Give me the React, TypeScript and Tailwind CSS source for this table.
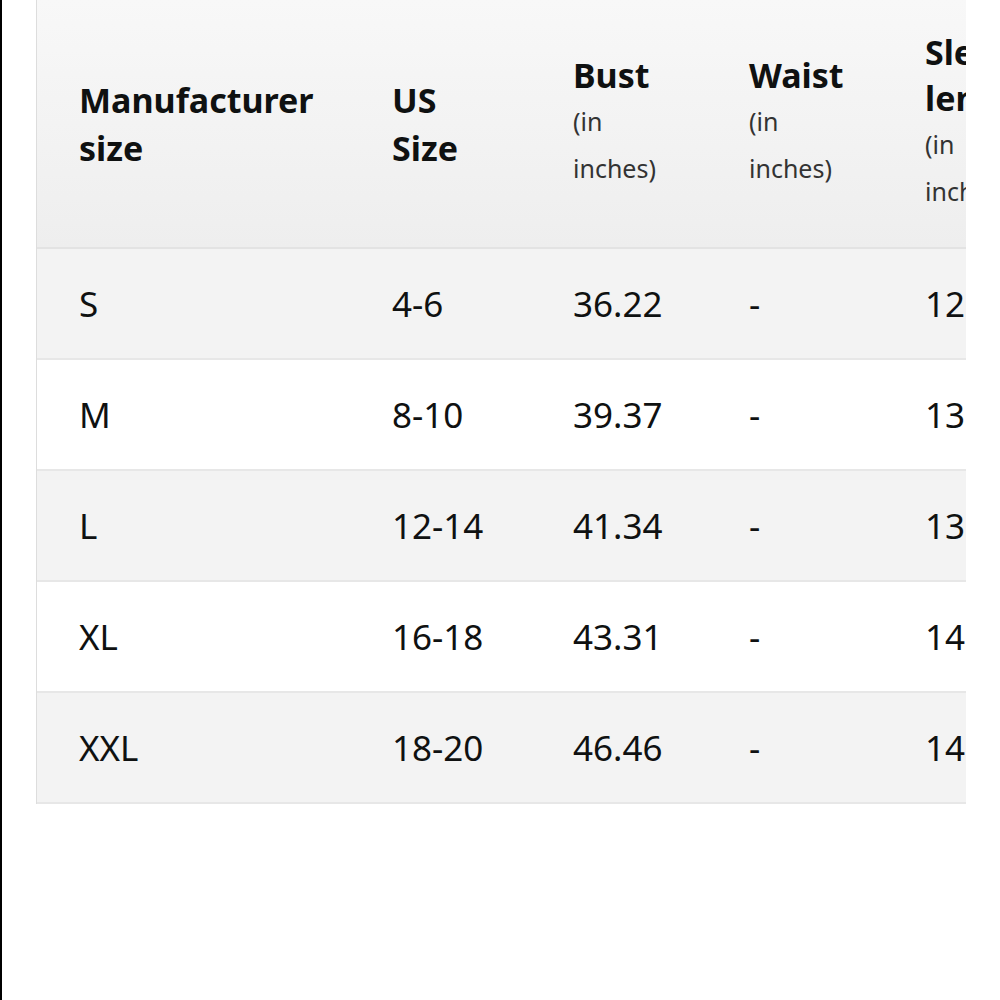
import React from "react";

const rows = [
  ["S", "4-6", "36.22", "-", "12"],
  ["M", "8-10", "39.37", "-", "13"],
  ["L", "12-14", "41.34", "-", "13"],
  ["XL", "16-18", "43.31", "-", "14"],
  ["XXL", "18-20", "46.46", "-", "14"],
];

const widths = ["w-[313px]", "w-[181px]", "w-[176px]", "w-[176px]", "w-[176px]"];

export default function App() {
  return (
    <div
      className="w-[1000px] h-[1000px] bg-white flex text-[#0f1111]"
      style={{ fontFamily: '"Noto Sans", "Open Sans", sans-serif' }}
    >
      <div className="w-[2px] h-full bg-black" />
      <div className="ml-[34px] w-[930px] overflow-hidden">
        <div className="w-[1100px] border-l border-[#dddddd]">
          <div className="flex h-[249px] bg-gradient-to-b from-[#f8f8f8] to-[#eeeeee] border-b-2 border-[#e3e3e3]">
            <div className={`${widths[0]} shrink-0 pl-[42px] flex flex-col justify-center text-[34px] font-bold leading-[48px]`}>
              <span>Manufacturer</span>
              <span>size</span>
            </div>
            <div className={`${widths[1]} shrink-0 pl-[42px] flex flex-col justify-center text-[34px] font-bold leading-[48px]`}>
              <span>US</span>
              <span>Size</span>
            </div>
            {[
              ["Bust"],
              ["Waist"],
              ["Sleeve", "length"],
            ].map((title, i) => (
              <div key={i} className={`${widths[i + 2]} shrink-0 pl-[42px] flex flex-col justify-center pb-[4px]`}>
                {title.map((t) => (
                  <span key={t} className="text-[34px] font-bold leading-[46px]">{t}</span>
                ))}
                <span className="text-[25px] leading-[47px] text-[#333333]">(in</span>
                <span className="text-[25px] leading-[47px] text-[#333333]">inches)</span>
              </div>
            ))}
          </div>
          {rows.map((r, ri) => (
            <div
              key={ri}
              className={`flex h-[111px] items-center border-b-2 border-[#e7e7e7] ${ri % 2 === 0 ? "bg-[#f3f3f3]" : "bg-white"}`}
            >
              {r.map((c, ci) => (
                <div key={ci} className={`${widths[ci]} shrink-0 pl-[42px] text-[35px] leading-[48px]`}>
                  {c}
                </div>
              ))}
            </div>
          ))}
        </div>
      </div>
    </div>
  );
}
